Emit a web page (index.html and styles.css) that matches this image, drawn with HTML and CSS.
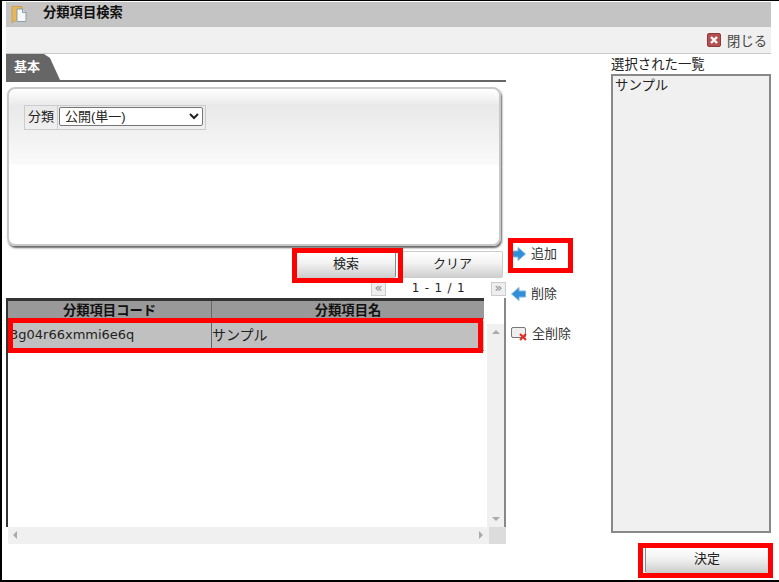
FILE: index.html
```html
<!DOCTYPE html>
<html lang="ja">
<head>
    <meta charset="UTF-8">
    <title>分類項目検索</title>
    <link rel="stylesheet" href="styles.css">
</head>
<body>
<div class="frame">
    <div class="title-bar">
        <svg class="title-icon" width="16" height="18" viewBox="0 0 16 18">
            <path d="M1 1.5 H11 V4 H6 V15 L1 17.5 Z" fill="#e6b85c" stroke="#c9a055" stroke-width="1"/>
            <path d="M6 4 H11.5 L15 7.5 V16.5 H6 Z" fill="#f6f8f8" stroke="#8fa0a8" stroke-width="1"/>
            <path d="M11.5 4 V7.5 H15" fill="#cfdde2" stroke="#8fa0a8" stroke-width="1"/>
        </svg>
        <span class="title-text">分類項目検索</span>
    </div>
    <div class="tool-bar">
        <svg width="14" height="14" viewBox="0 0 14 14">
            <rect x="0.5" y="0.5" width="13" height="13" rx="1.5" fill="#b5504f" stroke="#8d3a3a"/>
            <path d="M4 4 L10 10 M10 4 L4 10" stroke="#fff" stroke-width="2.4"/>
        </svg>
        <span class="close-text">閉じる</span>
    </div>

    <div class="main">
        <div class="left">
            <div class="tab-row"><div class="tab">基本</div></div>
            <div class="panel">
                <div class="field">
                    <label class="field-label">分類</label>
                    <div class="field-value">
                        <select class="select"><option>公開(単一)</option></select>
                    </div>
                </div>
            </div>
            <div class="buttons">
                <button class="btn btn-search">検索</button>
                <button class="btn btn-clear">クリア</button>
            </div>
            <div class="pager">
                <span class="page-btn">«</span>
                <span class="page-num">1 - 1 / 1</span>
                <span class="page-btn">»</span>
            </div>
            <div class="grid-box">
                <div class="grid-body">
                    <div class="grid-table">
                        <div class="grid-head">
                            <div class="col-code">分類項目コード</div>
                            <div class="col-name">分類項目名</div>
                        </div>
                        <div class="grid-row">
                            <div class="col-code">3g04r66xmmi6e6q</div>
                            <div class="col-name">サンプル</div>
                        </div>
                    </div>
                    <div class="v-scroll">
                        <span class="arrow-up"></span>
                        <span class="arrow-down"></span>
                    </div>
                </div>
                <div class="h-scroll">
                    <div class="h-track">
                        <span class="arrow-left"></span>
                        <span class="arrow-right"></span>
                    </div>
                    <div class="corner"></div>
                </div>
            </div>
        </div>

        <div class="actions">
            <div class="action">
                <svg width="15" height="14" viewBox="0 0 15 14"><path d="M0.5 4 H7 V0.5 L14.5 7 L7 13.5 V10 H0.5 Z" fill="#2f8fd8" stroke="#7fb4dc" stroke-width="1"/></svg>
                <span>追加</span>
            </div>
            <div class="action">
                <svg width="15" height="14" viewBox="0 0 15 14"><path d="M14.5 4 H8 V0.5 L0.5 7 L8 13.5 V10 H14.5 Z" fill="#2f8fd8" stroke="#7fb4dc" stroke-width="1"/></svg>
                <span>削除</span>
            </div>
            <div class="action">
                <svg width="16" height="16" viewBox="0 0 16 16">
                    <rect x="0.5" y="1.5" width="14" height="10" rx="1.5" fill="#eee" stroke="#777"/>
                    <path d="M9 8 L15 14 M15 8 L9 14" stroke="#e8291c" stroke-width="2"/>
                </svg>
                <span>全削除</span>
            </div>
        </div>

        <div class="right">
            <div class="list-title">選択された一覧</div>
            <div class="list-box">サンプル</div>
            <div class="right-foot">
                <button class="btn btn-ok">決定</button>
            </div>
        </div>
    </div>

    <!-- red callouts drawn over the screen -->
    <div class="mark mark-search"></div>
    <div class="mark mark-add"></div>
    <div class="mark mark-row"></div>
    <div class="mark mark-ok"></div>
</div>
</body>
</html>
```

FILE: styles.css
```css
html, body {
    margin: 0;
    padding: 0;
    background: #fff;
}
body {
    font-family: "Noto Sans CJK JP", "DejaVu Sans", sans-serif;
    font-size: 13px;
    color: #222;
}
.frame {
    position: relative;
    box-sizing: border-box;
    width: 779px;
    height: 582px;
    padding: 1px 8px 0 4px;
    border-left: 2px solid #000;
    border-top: 1px solid #000;
    border-bottom: 2px solid #000;
    overflow: hidden;
}
.title-bar {
    display: flex;
    align-items: center;
    height: 25px;
    background: #c4c4c4;
    padding-left: 5px;
}
.title-text {
    margin-left: 16px;
    font-weight: bold;
    font-size: 13.3px;
    line-height: 20px;
    color: #111;
    position: relative;
    top: -3px;
}
.title-icon {
    position: relative;
    top: -1px;
}
.tool-bar {
    display: flex;
    align-items: center;
    justify-content: flex-end;
    gap: 6px;
    box-sizing: border-box;
    height: 27px;
    background: #f0f0f0;
    border-bottom: 1px solid #c8c8c8;
    padding-right: 4px;
}
.close-text {
    color: #444;
    font-size: 13.3px;
}
.main {
    display: flex;
}
.left {
    width: 500px;
    flex: none;
}
.tab-row {
    height: 28px;
    box-sizing: border-box;
    border-bottom: 2px solid #666;
}
.tab {
    box-sizing: border-box;
    width: 54px;
    height: 26px;
    padding: 2px 0 0 8px;
    background: #666;
    color: #fff;
    font-weight: bold;
    font-size: 13px;
    line-height: 20px;
    clip-path: polygon(0 0, 38px 0, 44px 4px, 54px 26px, 0 26px);
}
.panel {
    box-sizing: border-box;
    width: 494px;
    height: 159px;
    margin: 5px 0 0 1px;
    padding: 16px 15px;
    border: 2px solid #c8c8c8;
    border-radius: 8px;
    background: linear-gradient(#fff 0, #e9e9e9 17px, #fafafa 75px, #fff 77px);
    box-shadow: 1px 2px 2px #666;
}
.field {
    display: flex;
    width: fit-content;
    height: 23px;
    border: 1px solid #ccc;
}
.field-label {
    width: 32px;
    text-align: center;
    line-height: 19px;
    border-right: 1px solid #ccc;
    font-size: 13px;
}
.field-value {
    padding: 1px 2px 0 1px;
}
.select {
    display: block;
    width: 144px;
    height: 19px;
    margin: 0;
    font-family: "Liberation Sans", "Noto Sans CJK JP", sans-serif;
    font-size: 13px;
    color: #222;
    background: #fff;
    border: 1px solid #767676;
    border-radius: 2px;
    padding: 0 0 0 1px;
}
.buttons {
    display: flex;
    justify-content: flex-end;
    margin-top: 5px;
    margin-right: 3px;
}
.btn {
    box-sizing: border-box;
    height: 27px;
    padding: 0 0 4px;
    border: 1px solid #ccc;
    border-radius: 2px;
    background: linear-gradient(#fff, #f2f2f2 45%, #cfcfcf);
    font-family: "Noto Sans CJK JP", sans-serif;
    font-size: 13px;
    color: #222;
}
.btn-search {
    width: 100px;
    margin-right: 6px;
    border-right: 1px solid #888;
}
.btn-clear {
    width: 101px;
}
.pager {
    display: flex;
    justify-content: flex-end;
    align-items: center;
    height: 15px;
    margin-top: 3px;
}
.page-btn {
    box-sizing: border-box;
    width: 15px;
    height: 14px;
    border: 1px solid #ccc;
    background: #eee;
    color: #888;
    font-family: "DejaVu Sans", sans-serif;
    font-size: 13px;
    line-height: 10px;
    text-align: center;
}
.page-num {
    width: 105px;
    padding-bottom: 2px;
    text-align: center;
    font-family: "DejaVu Sans", sans-serif;
    font-size: 12px;
    letter-spacing: 0.8px;
}
.grid-box {
    box-sizing: border-box;
    width: 500px;
    margin-top: 2px;
}
.grid-body {
    display: flex;
    height: 229px;
    border-right: 2px solid #888;
}
.grid-table {
    box-sizing: border-box;
    width: 479px;
    border-left: 2px solid #333;
    border-top: 3px solid #333;
}
.grid-head {
    display: flex;
    height: 18px;
    background: #999;
    font-weight: bold;
    font-size: 13.3px;
    line-height: 17px;
    text-align: center;
    color: #111;
}
.grid-row {
    display: flex;
    height: 29px;
    margin-top: 2px;
    background: #c0c0c0;
    font-size: 14px;
    line-height: 26px;
    border-bottom: 1px solid #777;
}
.col-code {
    width: 204px;
    box-sizing: border-box;
    border-right: 1px solid #666;
    white-space: nowrap;
    overflow: hidden;
}
.grid-row .col-code {
    padding-left: 2px;
    font-family: "DejaVu Sans", sans-serif;
    font-size: 13px;
    line-height: 27px;
}
.col-name {
    flex: 1;
}
.v-scroll {
    position: relative;
    width: 17px;
    margin: 26px 0 0 3px;
    background: #f0f0f0;
}
.h-scroll {
    display: flex;
    height: 17px;
    margin-left: 2px;
    background: #f0f0f0;
}
.h-track {
    position: relative;
    flex: 1;
}
.corner {
    width: 17px;
    background: #dcdcdc;
}
.arrow-up, .arrow-down, .arrow-left, .arrow-right {
    position: absolute;
    width: 0;
    height: 0;
}
.arrow-up {
    top: 6px;
    left: 5px;
    border: 4px solid transparent;
    border-top: 0;
    border-bottom: 4px solid #aaa;
}
.arrow-down {
    bottom: 6px;
    left: 5px;
    border: 4px solid transparent;
    border-bottom: 0;
    border-top: 4px solid #aaa;
}
.arrow-left {
    top: 4px;
    left: 5px;
    border: 4px solid transparent;
    border-left: 0;
    border-right: 4px solid #aaa;
}
.arrow-right {
    top: 4px;
    right: 6px;
    border: 4px solid transparent;
    border-right: 0;
    border-left: 4px solid #aaa;
}
.actions {
    width: 105px;
    flex: none;
    padding: 188px 0 0 5px;
    box-sizing: border-box;
    display: flex;
    flex-direction: column;
    gap: 20px;
}
.action {
    display: flex;
    align-items: center;
    gap: 5px;
    height: 20px;
    font-size: 13px;
    color: #333;
}
.action svg {
    margin-top: 4px;
}
.right {
    flex: 1;
}
.list-title {
    height: 20px;
    font-size: 13.4px;
    line-height: 18px;
}
.list-box {
    box-sizing: border-box;
    height: 459px;
    padding: 0 2px;
    border: 2px solid #888;
    background: #f0f0f0;
    font-size: 13.4px;
    line-height: 16px;
}
.right-foot {
    display: flex;
    justify-content: flex-end;
    margin-top: 13px;
}
.btn-ok {
    width: 124px;
    margin-right: 2px;
    border-left: 1px solid #888;
}
.mark {
    position: absolute;
    box-sizing: border-box;
    border: 5px solid #f00;
    pointer-events: none;
}
.mark-search {
    left: 290px;
    top: 247px;
    width: 111px;
    height: 35px;
}
.mark-add {
    left: 506px;
    top: 237px;
    width: 65px;
    height: 35px;
}
.mark-row {
    left: 6px;
    top: 317px;
    width: 475px;
    height: 35px;
}
.mark-ok {
    left: 636px;
    top: 542px;
    width: 135px;
    height: 35px;
}
```
